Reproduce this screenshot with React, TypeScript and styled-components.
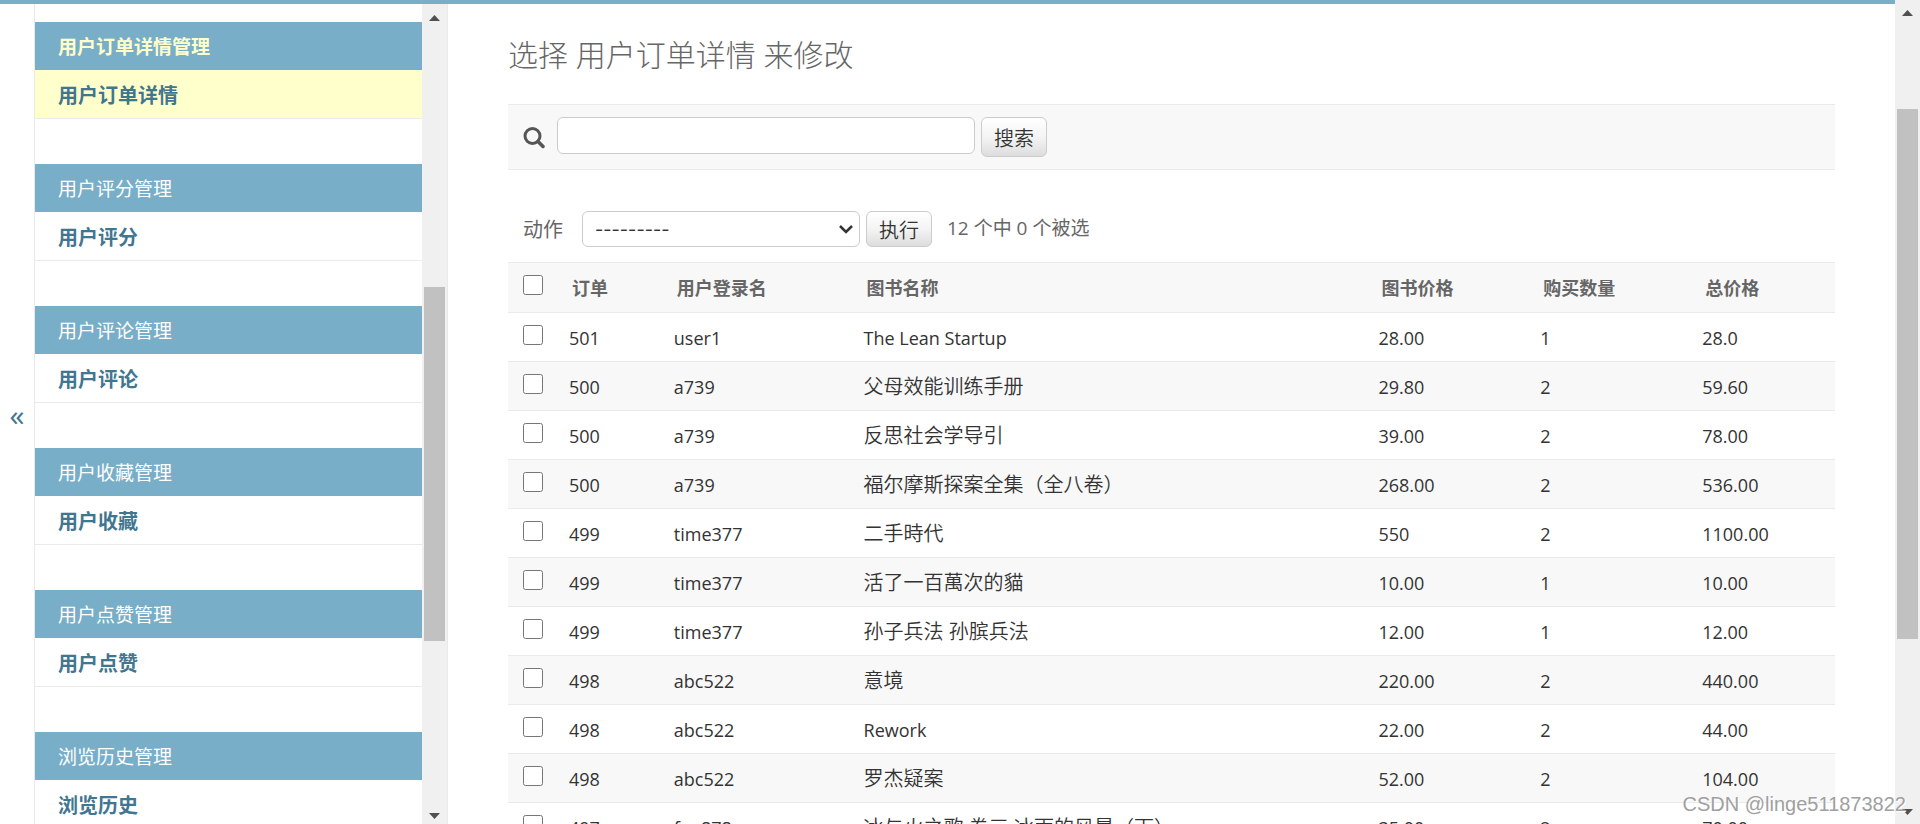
import React from "react";
import styled, { createGlobalStyle } from "styled-components";

const GlobalStyle = createGlobalStyle`
  *, *::before, *::after { box-sizing: border-box; }
  body {
    margin: 0;
    overflow: hidden;
    background: #fff;
    color: #333;
    font-family: "Open Sans", "Noto Sans CJK SC", sans-serif;
    font-size: 18px;
  }
`;

const Window = styled.div`
  display: flex;
  height: 100vh;
  overflow: hidden;
  position: relative;
`;

const Page = styled.div`
  flex: 1;
  min-width: 0;
  display: flex;
  flex-direction: column;
  border-top: 4px solid #79aec8;
`;

const Columns = styled.div`
  flex: 1;
  min-height: 0;
  display: flex;
`;

const SidebarToggle = styled.button`
  flex: none;
  width: 35px;
  padding: 2px 0 0;
  border: 0;
  border-right: 1px solid #eaeaea;
  background: #fff;
  color: #417690;
  font: 30px/30px "Open Sans", sans-serif;
  cursor: pointer;
`;

const Sidebar = styled.nav`
  flex: none;
  width: 413px;
  display: flex;
  border-right: 1px solid #eaeaea;
`;

const AppList = styled.div`
  flex: 1;
  padding-top: 18px;
  overflow: hidden;
`;

const AppModule = styled.section`
  margin-bottom: 45px;
`;

const AppCaption = styled.h2<{ $current?: boolean }>`
  margin: 0;
  padding: 2px 23px 0;
  background: #79aec8;
  font-size: 19px;
  line-height: 46px;
  font-weight: ${(p) => (p.$current ? 700 : 400)};

  a {
    color: ${(p) => (p.$current ? "#ffc" : "#fff")};
    text-decoration: none;
  }
`;

const ModelRow = styled.div<{ $current?: boolean }>`
  padding: 4px 23px 0;
  border-bottom: 1px solid #eaeaea;
  background: ${(p) => (p.$current ? "#ffc" : "#fff")};
  font-size: 20px;
  line-height: 44px;
  font-weight: 700;

  a {
    color: #417690;
    text-decoration: none;
  }
`;

const Scroller = styled.div<{
  $top: number;
  $before: number;
  $thumb: number;
  $after: number;
  $bottom: number;
}>`
  flex: none;
  width: 25px;
  padding: 0 2px;
  display: grid;
  grid-template-rows:
    ${(p) => p.$top}px ${(p) => p.$before}fr ${(p) => p.$thumb}fr ${(p) => p.$after}fr
    ${(p) => p.$bottom}px;
  justify-items: center;
  align-items: center;
  background: #f0f0f0;
`;

const Thumb = styled.div`
  grid-row: 3;
  width: 100%;
  height: 100%;
  background: #c1c1c1;
`;

const Arrow = styled.svg<{ $row: number }>`
  grid-row: ${(p) => p.$row};
  width: 11px;
  height: 6px;
  fill: #505050;
`;

const Main = styled.main`
  flex: 1;
  min-width: 0;
  padding: 31px 60px 30px;
  overflow: hidden;
`;

const Title = styled.h1`
  margin: 0 0 29px;
  color: #666;
  font-size: 30px;
  line-height: 40px;
  font-weight: 300;
`;

const Toolbar = styled.form`
  display: flex;
  align-items: flex-start;
  gap: 6px;
  height: 66px;
  padding: 12px 15px;
  border-top: 1px solid #eaeaea;
  border-bottom: 1px solid #eaeaea;
  background: #f8f8f8;
`;

const SearchLabel = styled.label`
  display: flex;
  padding: 10px 6px 0 0;
`;

const SearchInput = styled.input`
  width: 418px;
  height: 37px;
  padding: 3px 8px;
  border: 1px solid #ccc;
  border-radius: 6px;
  background: #fff;
  font: inherit;
`;

const Button = styled.button<{ $tall?: boolean }>`
  height: ${(p) => (p.$tall ? 40 : 36)}px;
  padding: 3px 12px 0;
  border: 1px solid #ccc;
  border-radius: 6px;
  background: linear-gradient(#fff, #f4f4f4 50%, #ddd);
  color: #333;
  font-family: inherit;
  font-size: 20px;
  font-weight: 350;
  line-height: 30px;
  cursor: pointer;
`;

const Actions = styled.form`
  display: flex;
  align-items: center;
  gap: 6px;
  padding: 41px 15px 15px;
  color: #666;
  font-size: 20px;
  line-height: 36px;
`;

const ActionLabel = styled.label`
  padding-top: 2px;
  line-height: 34px;
`;

const SelectBox = styled.div`
  position: relative;
  display: flex;
  margin-left: 13px;
`;

const ActionSelect = styled.select`
  appearance: none;
  width: 278px;
  height: 36px;
  padding: 0 12px;
  border: 1px solid #ccc;
  border-radius: 6px;
  background: #fff;
  color: #333;
  font: 18px "Inter", sans-serif;
`;

const Chevron = styled.svg`
  position: absolute;
  right: 7px;
  top: 14px;
  width: 14px;
  height: 9px;
  fill: none;
  stroke: #333;
  stroke-width: 2.5;
  pointer-events: none;
`;

const Counter = styled.span`
  margin-left: 9px;
  font-size: 19px;
  line-height: 34px;
  padding-bottom: 2px;
`;

const ResultTable = styled.table`
  width: 100%;
  table-layout: fixed;
  border-collapse: separate;
  border-spacing: 0;
  border-top: 1px solid #eaeaea;
`;

const HeadCell = styled.th<{ $width?: string }>`
  width: ${(p) => p.$width ?? "auto"};
  height: 50px;
  padding: 0 15px;
  border-bottom: 1px solid #eaeaea;
  background: #f8f8f8;
  color: #666;
  font-size: 18px;
  font-weight: 700;
  line-height: 24px;
  text-align: left;
`;

const Row = styled.tr`
  &:nth-child(even) {
    background: #f8f8f8;
  }
`;

const Cell = styled.td`
  height: 49px;
  padding: 2px 12px 0;
  border-bottom: 1px solid #eaeaea;
  font-size: 18px;
  line-height: 24px;
  white-space: nowrap;
`;

const NameCell = styled(Cell)<{ $latin: boolean }>`
  font-size: ${(p) => (p.$latin ? 18 : 20)}px;
  font-weight: ${(p) => (p.$latin ? 400 : 350)};
`;

const CheckCell = styled(Cell)`
  padding: 0 15px;
`;

const Checkbox = styled.input`
  display: block;
  width: 20px;
  height: 20px;
  margin: 0 0 5px;
`;

const Watermark = styled.div`
  position: absolute;
  right: 14px;
  bottom: 8px;
  color: #a0a0a0;
  font: 20px/24px "Liberation Sans", sans-serif;
  text-shadow: 1px 1px 0 #fff;
  pointer-events: none;
`;

const apps = [
  "用户订单详情",
  "用户评分",
  "用户评论",
  "用户收藏",
  "用户点赞",
  "浏览历史",
];

const columns = [
  { label: "订单", width: "7.9%" },
  { label: "用户登录名", width: "14.3%" },
  { label: "图书名称", width: "38.8%" },
  { label: "图书价格", width: "12.2%" },
  { label: "购买数量", width: "12.2%" },
  { label: "总价格" },
];

const orders = [
  ["501", "user1", "The Lean Startup", "28.00", "1", "28.0"],
  ["500", "a739", "父母效能训练手册", "29.80", "2", "59.60"],
  ["500", "a739", "反思社会学导引", "39.00", "2", "78.00"],
  ["500", "a739", "福尔摩斯探案全集（全八卷）", "268.00", "2", "536.00"],
  ["499", "time377", "二手時代", "550", "2", "1100.00"],
  ["499", "time377", "活了一百萬次的貓", "10.00", "1", "10.00"],
  ["499", "time377", "孙子兵法 孙膑兵法", "12.00", "1", "12.00"],
  ["498", "abc522", "意境", "220.00", "2", "440.00"],
  ["498", "abc522", "Rework", "22.00", "2", "44.00"],
  ["498", "abc522", "罗杰疑案", "52.00", "2", "104.00"],
  ["497", "fan878", "冰与火之歌 卷三 冰雨的风暴（下）", "35.00", "2", "70.00"],
];

const isLatin = (text: string) => /^[\w\s]+$/.test(text);

type ScrollbarProps = {
  top: number;
  before: number;
  thumb: number;
  after: number;
  bottom: number;
};

function Scrollbar({ top, before, thumb, after, bottom }: ScrollbarProps) {
  return (
    <Scroller
      $top={top}
      $before={before}
      $thumb={thumb}
      $after={after}
      $bottom={bottom}
      aria-hidden="true"
    >
      <Arrow $row={1} viewBox="0 0 11 6"><path d="M5.500 0L11 6H0z" /></Arrow>
      <Thumb />
      <Arrow $row={5} viewBox="0 0 11 6"><path d="M0 0h11L5.500 6z" /></Arrow>
    </Scroller>
  );
}

export default function App() {
  return (
    <Window>
      <GlobalStyle />
      <Page>
        <Columns>
          <SidebarToggle type="button" aria-label="切换导航">«</SidebarToggle>
          <Sidebar>
            <AppList>
              {apps.map((name, i) => (
                <AppModule key={name}>
                  <AppCaption $current={i === 0}><a href="#app">{name}管理</a></AppCaption>
                  <ModelRow $current={i === 0}><a href="#model">{name}</a></ModelRow>
                </AppModule>
              ))}
            </AppList>
            <Scrollbar top={28} before={255} thumb={354} after={167} bottom={16} />
          </Sidebar>
          <Main>
            <Title>选择 用户订单详情 来修改</Title>
            <Toolbar onSubmit={(e) => e.preventDefault()}>
              <SearchLabel htmlFor="searchbar" aria-label="搜索">
                <svg width="22" height="22" viewBox="0 0 22 22" fill="none" stroke="#555">
                  <circle cx="9.500" cy="9" r="7.500" strokeWidth="3" />
                  <path d="M15 14.500L20 19.500" strokeWidth="3.500" strokeLinecap="round" />
                </svg>
              </SearchLabel>
              <SearchInput id="searchbar" type="text" />
              <Button type="submit" $tall>搜索</Button>
            </Toolbar>
            <Actions onSubmit={(e) => e.preventDefault()}>
              <ActionLabel htmlFor="action">动作</ActionLabel>
              <SelectBox>
                <ActionSelect id="action">
                  <option>---------</option>
                </ActionSelect>
                <Chevron viewBox="0 0 14 9"><path d="M1 1l6 6 6-6" /></Chevron>
              </SelectBox>
              <Button type="submit">执行</Button>
              <Counter>12 个中 0 个被选</Counter>
            </Actions>
            <ResultTable>
              <thead>
                <tr>
                  <HeadCell $width="49px" scope="col">
                    <Checkbox type="checkbox" aria-label="全选" />
                  </HeadCell>
                  {columns.map((c) => (
                    <HeadCell key={c.label} $width={c.width} scope="col">{c.label}</HeadCell>
                  ))}
                </tr>
              </thead>
              <tbody>
                {orders.map((order, i) => (
                  <Row key={i}>
                    <CheckCell>
                      <Checkbox type="checkbox" aria-label={order[2]} />
                    </CheckCell>
                    {order.map((value, j) =>
                      j === 2 ? (
                        <NameCell key={j} $latin={isLatin(value)}>{value}</NameCell>
                      ) : (
                        <Cell key={j}>{value}</Cell>
                      )
                    )}
                  </Row>
                ))}
              </tbody>
            </ResultTable>
          </Main>
        </Columns>
      </Page>
      <Scrollbar top={26} before={83} thumb={530} after={161} bottom={24} />
      <Watermark>CSDN @linge511873822</Watermark>
    </Window>
  );
}
